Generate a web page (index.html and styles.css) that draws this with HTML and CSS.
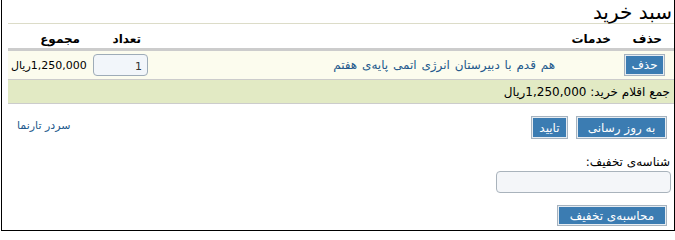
FILE: index.html
```html
<!DOCTYPE html>
<html lang="fa" dir="rtl">
<head>
<meta charset="utf-8">
<title>سبد خرید</title>
<link rel="stylesheet" href="styles.css">
</head>
<body>
<div class="frame">
  <h1 class="title">سبد خرید</h1>
  <div class="cart">
    <div class="row head">
      <div class="c-del">حذف</div>
      <div class="c-svc">خدمات</div>
      <div class="c-qty">تعداد</div>
      <div class="c-sum">مجموع</div>
    </div>
    <div class="row item">
      <div class="c-del"><button class="btn btn-del" type="button">حذف</button></div>
      <div class="c-svc"><a class="svc-link" href="#">هم قدم با دبیرستان انرژی اتمی پایه&zwnj;ی هفتم</a></div>
      <div class="c-qty"><input class="qty" type="text" value="1"></div>
      <div class="c-sum">1,250,000ریال</div>
    </div>
    <div class="row total">
      <div class="total-text">جمع اقلام خرید: 1,250,000ریال</div>
    </div>
  </div>
  <div class="actions">
    <div class="btns">
      <button class="btn btn-upd" type="button">به روز رسانی</button>
      <button class="btn btn-ok" type="button">تایید</button>
    </div>
    <a class="home-link" href="#">سردر تارنما</a>
  </div>
  <div class="discount">
    <label class="disc-label" for="disc">شناسه&zwnj;ی تخفیف:</label>
    <input class="disc-input" id="disc" type="text">
    <button class="btn btn-calc" type="button">محاسبه&zwnj;ی تخفیف</button>
  </div>
</div>
</body>
</html>
```
FILE: styles.css
```css
html, body {
  margin: 0;
  padding: 0;
  background: #fff;
}
body {
  font-family: "DejaVu Sans", sans-serif;
  font-size: 11px;
  color: #000;
}
.frame {
  box-sizing: border-box;
  width: 674px;
  height: 231px;
  border: 1px solid #000;
  border-top: none;
  padding-left: 6px;
}
.title {
  margin: 0;
  box-sizing: border-box;
  height: 24px;
  padding: 2px 2px 0 0;
  font-size: 20px;
  font-weight: normal;
  line-height: 20px;
  border-bottom: 1px solid #dcdcc8;
}
.row {
  display: grid;
  grid-template-columns: 54px 1fr 72px 81px;
  align-items: center;
}
.head {
  height: 24px;
  align-items: end;
  font-weight: bold;
  font-size: 12px;
  border-bottom: 3px solid #cccccc;
}
.head > div {
  line-height: 14px;
  padding-bottom: 2px;
}
.head .c-del { padding-right: 12px; }
.head .c-svc { padding-right: 9px; }
.head .c-qty { padding-right: 20px; }
.head .c-sum { padding-right: 9px; }
.item {
  height: 28px;
  background: #fcfcee;
  border-bottom: 1px solid #cccccc;
}
.item .c-del { padding-right: 9px; }
.item .c-svc { padding-right: 65px; }
.item .c-qty { text-align: left; padding-left: 4px; }
.item .c-sum { text-align: left; padding-left: 3px; }
.svc-link {
  color: #23598c;
  text-decoration: none;
  font-size: 12px;
  word-spacing: 1px;
}
.qty {
  box-sizing: border-box;
  width: 55px;
  height: 22px;
  border: 1px solid #9eacb8;
  border-radius: 4px;
  background: #f2f6fa;
  font-family: "DejaVu Sans", sans-serif;
  font-size: 11px;
  color: #333;
  text-align: right;
  padding: 2px 5px 0 5px;
  direction: ltr;
}
.total {
  display: block;
  height: 23px;
  background: #e2eac4;
  border-bottom: 1px solid #cccccc;
}
.total-text {
  padding: 5px 4px 0 0;
  font-size: 12px;
  line-height: 14px;
}
.btn {
  box-sizing: border-box;
  border: 1px solid #a6b3bf;
  box-shadow: inset 0 0 0 1px #e6ecf2;
  background: #3b7cb2;
  color: #fff;
  font-family: "DejaVu Sans", sans-serif;
  font-size: 12px;
  line-height: 14px;
  padding: 0 5px;
  margin: 0;
  cursor: pointer;
}
.btn-del { width: 41px; height: 22px; }
.actions {
  display: flex;
  justify-content: space-between;
  align-items: center;
  margin-top: 12px;
  padding-right: 7px;
  padding-left: 9px;
}
.btns {
  display: flex;
  gap: 8px;
}
.btn-upd { width: 91px; height: 23px; }
.btn-ok { width: 37px; height: 23px; }
.home-link {
  color: #23598c;
  text-decoration: none;
  font-size: 11px;
  margin-top: -4px;
}
.discount {
  display: flex;
  flex-direction: column;
  align-items: flex-start;
  padding-right: 3px;
  margin-top: 15px;
}
.disc-label {
  font-size: 12px;
  line-height: 16px;
  padding-right: 1px;
}
.disc-input {
  box-sizing: border-box;
  width: 175px;
  height: 22px;
  margin-top: 1px;
  border: 1px solid #a9b3bc;
  border-radius: 4px;
  background: #f4f6f9;
}
.btn-calc {
  width: 110px;
  height: 21px;
  margin-top: 12px;
  margin-right: 4px;
}
```
